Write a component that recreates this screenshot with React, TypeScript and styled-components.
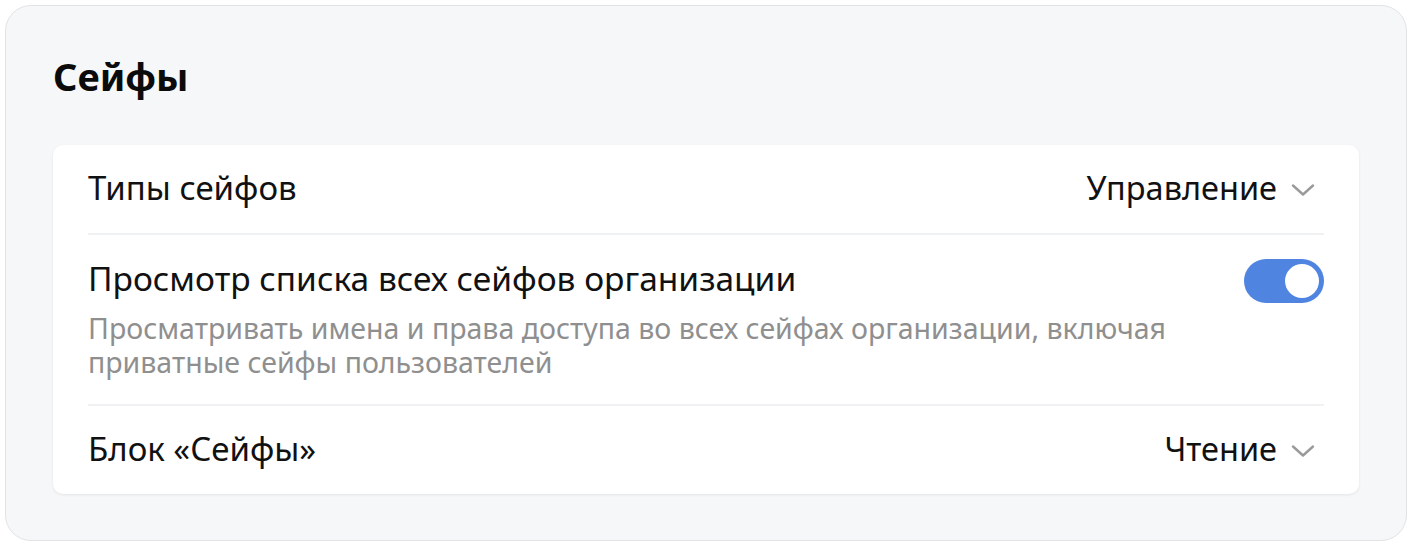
import React, { useState } from 'react';
import styled, { createGlobalStyle } from 'styled-components';

const GlobalStyle = createGlobalStyle`
	body {
		margin: 0;
		background: #ffffff;
		font-family: 'Noto Sans', 'Open Sans', sans-serif;
		color: #111111;
	}
`;

const Chevron = () => (
	<svg width="24" height="14" viewBox="0 0 24 14" fill="none">
		<path d="M2 2.5l10 9 10-9" stroke="#9a9a9a" strokeWidth="2.4" strokeLinecap="round" strokeLinejoin="round" />
	</svg>
);

const App = () => {
	const [viewAll, setViewAll] = useState(true);

	return (
		<>
			<GlobalStyle />
			<Panel>
				<Title>Сейфы</Title>
				<Card>
					<Row>
						<RowLabel>Типы сейфов</RowLabel>
						<Select>
							Управление
							<Chevron />
						</Select>
					</Row>
					<Row>
						<RowText>
							<RowLabel $wide>Просмотр списка всех сейфов организации</RowLabel>
							<RowHint>
								Просматривать имена и права доступа во всех сейфах организации, включая приватные сейфы
								пользователей
							</RowHint>
						</RowText>
						<Toggle $on={viewAll} onClick={() => setViewAll((prev) => !prev)}>
							<Knob />
						</Toggle>
					</Row>
					<Row>
						<RowLabel>Блок «Сейфы»</RowLabel>
						<Select>
							Чтение
							<Chevron />
						</Select>
					</Row>
				</Card>
			</Panel>
		</>
	);
};

export default App;

const Panel = styled.div`
	margin: 5px;
	height: 536px;
	box-sizing: border-box;
	padding: 47px;
	background: #f6f7f9;
	border: 1px solid #e2e3e6;
	border-radius: 26px;
	display: flex;
	flex-direction: column;
`;

const Title = styled.h1`
	margin: 0 0 46px;
	font-size: 38px;
	line-height: 46px;
	font-weight: 700;
	color: #0b0b0b;
`;

const Card = styled.div`
	background: #ffffff;
	border-radius: 10px;
	box-shadow: 0 1px 3px rgba(0, 0, 0, 0.08);
	padding: 0 35px;
	display: flex;
	flex-direction: column;
`;

const Row = styled.div`
	display: flex;
	align-items: flex-start;
	justify-content: space-between;
	gap: 24px;
	padding: 23px 0 25px;
	border-bottom: 2px solid #f0f1f3;

	&:last-child {
		border-bottom: none;
		padding-bottom: 25px;
	}
`;

const RowText = styled.div`
	display: flex;
	flex-direction: column;
	gap: 13px;
`;

const RowLabel = styled.div<{ $wide?: boolean }>`
	font-size: ${({ $wide }) => ($wide ? '33.5px' : '33px')};
	line-height: 40px;
	color: #111111;
`;

const RowHint = styled.div`
	font-size: 28.5px;
	line-height: 34px;
	color: #8f8f8f;
	max-width: 1120px;
`;

const Select = styled.div`
	display: flex;
	align-items: center;
	gap: 14px;
	font-size: 32.5px;
	line-height: 40px;
	color: #111111;
	padding-right: 9px;
	cursor: pointer;

	svg {
		margin-top: 3px;
	}
`;

const Toggle = styled.button<{ $on: boolean }>`
	flex-shrink: 0;
	width: 80px;
	height: 44px;
	border: none;
	border-radius: 22px;
	padding: 0 5px;
	margin-top: 1px;
	background: ${({ $on }) => ($on ? '#4f84e0' : '#cfd3da')};
	display: flex;
	align-items: center;
	justify-content: ${({ $on }) => ($on ? 'flex-end' : 'flex-start')};
	cursor: pointer;
`;

const Knob = styled.span`
	width: 34px;
	height: 34px;
	border-radius: 50%;
	background: #ffffff;
`;
